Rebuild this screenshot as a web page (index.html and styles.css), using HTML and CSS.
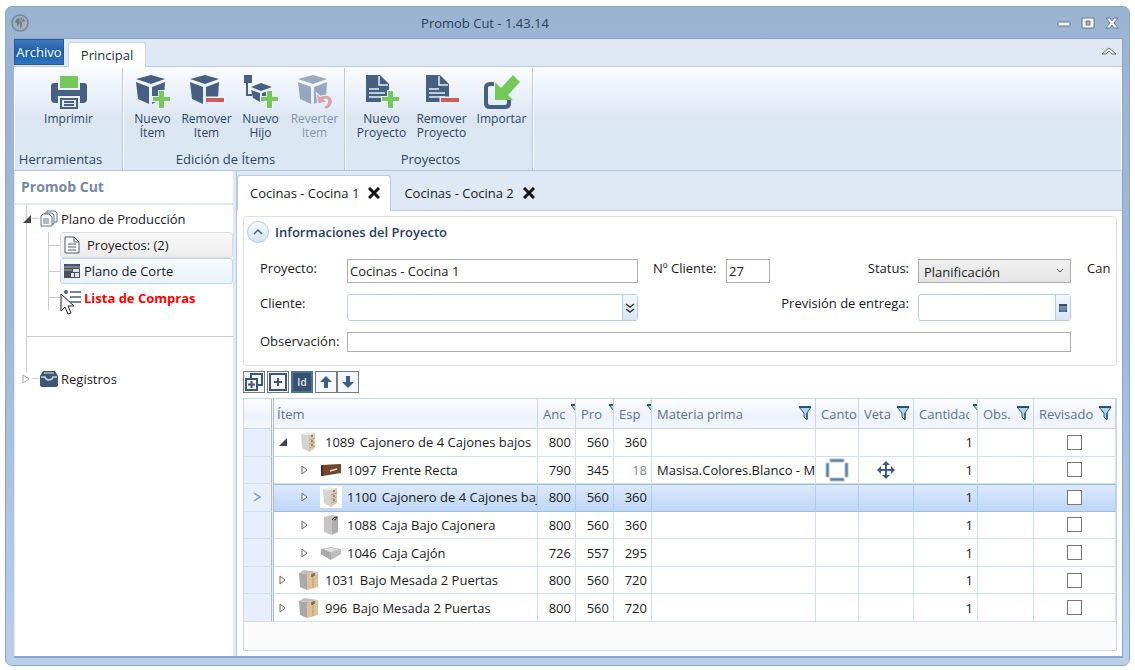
FILE: index.html
```html
<!doctype html>
<html lang="es">
	<head>
		<meta charset="utf-8"/>
		<title>Promob Cut - 1.43.14</title>
		<link rel="stylesheet" href="styles.css">
	</head>
	<body>
		<!-- iconos compartidos -->
		<svg class="defs" width="0" height="0">
			<symbol id="box" viewBox="0 0 36 36">
				<path d="M16 1 30 5 16 10 1 5zM1 8l13 5v17L3 25zM17 13l13-5-1 16-12 6z"/>
			</symbol>
			<symbol id="doc" viewBox="0 0 36 36">
				<path d="M2 1h14l9 9v18H2z"/>
				<path d="M15 2v9h9M5 15h10M5 19h16M5 23h16" fill="none" stroke="#e6eef8" stroke-width="1.5"/>
			</symbol>
			<symbol id="plus" viewBox="0 0 36 36">
				<path d="M24 17h5v6h6v4h-6v7h-5v-7h-6v-4h6z" fill="#76c85a" stroke="#eaf1fa" stroke-width="2" paint-order="stroke"/>
			</symbol>
			<symbol id="minus" viewBox="0 0 36 36">
				<path d="M17 24h18v4H17z" fill="#cd5c5c" stroke="#eaf1fa" stroke-width="3" paint-order="stroke"/>
			</symbol>
			<symbol id="funnel" viewBox="0 0 14 15">
				<path d="M1 1h12L9 7v7l-3-3V7z" fill="#a9d7f3" stroke="#33597f"/>
				<path d="M1 1h12" stroke="#1d3550" stroke-width="1.5"/>
				<path d="M9 7v6" stroke="#1d3550"/>
			</symbol>
			<symbol id="closed" viewBox="0 0 10 10">
				<path d="M2 1l5 4-5 4z" fill="#fff" stroke="#666"/>
			</symbol>
			<symbol id="open" viewBox="0 0 10 10">
				<path d="M9 1v8H1z" fill="#444"/>
			</symbol>
			<symbol id="drawers" viewBox="0 0 22 22">
				<path d="M3 3l8 1v17l-7-4z" fill="#d3d3d5"/>
				<path d="M3 3l7-2 7 1-6 2z" fill="#ececec"/>
				<path d="M11 4l6-2v15l-6 4z" fill="#dccab0"/>
				<path d="M11 9l6-2M11 13l6-2M11 17l6-2" stroke="#b8a48c"/>
				<path d="M13 5h2M13 10h2M13 14h2" stroke="#5d4b3c"/>
			</symbol>
			<symbol id="doors" viewBox="0 0 22 22">
				<path d="M1 4l8 1v16l-7-3z" fill="#aaa9a9"/>
				<path d="M1 4l5-3 14 2-11 2z" fill="#c4bcb2"/>
				<path d="M9 5l11-2v15L9 21z" fill="#dcc09a"/>
				<path d="M15 4v15" stroke="#bc9b70"/>
				<path d="M14 5v3M16 4v3" stroke="#333"/>
			</symbol>
		</svg>

		<div class="window">
			<header class="titlebar">
				<svg class="logo" viewBox="0 0 18 18"><circle cx="9" cy="9" r="8" fill="#9fb0bf" stroke="#708799" stroke-width="1.5"/><path d="M4 8c1-4 5-5 8-4l2 3-3 1v4l-2 3V9l-3 4V9z" fill="#6e7c87"/><path d="M9 3v5M12 4l-2 4" stroke="#9fb0bf"/></svg>
				<h1>Promob Cut - 1.43.14</h1>
				<div class="winbtns">
					<button type="button" aria-label="Minimizar"><svg viewBox="0 0 14 12"><path d="M1 5h12v4H1z" fill="#fff" stroke="#65788f"/></svg></button>
					<button type="button" aria-label="Maximizar"><svg viewBox="0 0 14 12"><path d="M1 1h12v10H1zM5 4v4h4V4z" fill="#fff" fill-rule="evenodd" stroke="#65788f"/></svg></button>
					<button type="button" aria-label="Cerrar"><svg viewBox="0 0 14 12"><path d="M1 1h4l2 3 2-3h4L9 6l4 5H9L7 8l-2 3H1l4-5z" fill="#fff" stroke="#65788f"/></svg></button>
				</div>
			</header>

			<div class="client">
				<!-- pestañas de la cinta -->
				<nav class="ribbon-tabs">
					<button type="button" class="file">Archivo</button>
					<button type="button" class="current">Principal</button>
					<button type="button" class="collapse" aria-label="Contraer"><svg viewBox="0 0 16 10"><path d="M1 8l7-6 7 6h-4L8 5 5 8z" fill="#fff" stroke="#666"/></svg></button>
				</nav>

				<div class="ribbon">
					<section class="group tools">
						<div class="items">
							<button type="button"><svg viewBox="0 0 36 36"><path d="M3 9h4v7h22V9h4q3 0 3 3v13q0 4-4 4h-3v-7H7v7H4q-4 0-4-4V12q0-3 3-3z"/><path d="M9 2h18v12H9z" fill="#76c85a"/><path d="M10 25h16v9H10zM13 28h10M13 31h10" fill="none" stroke="#465f82" stroke-width="2"/></svg>Imprimir</button>
						</div>
						<h2>Herramientas</h2>
					</section>
					<section class="group edit">
						<div class="items">
							<button type="button"><svg viewBox="0 0 36 36"><use href="#box"/><use href="#plus"/></svg>Nuevo<br>Ítem</button>
							<button type="button"><svg viewBox="0 0 36 36"><use href="#box"/><use href="#minus"/></svg>Remover<br>Item</button>
							<button type="button"><svg viewBox="0 0 36 36"><path d="M1 1h8v8H1zM18 9l11 4-11 4-10-4zM8 16l9 3v9l-7-4zM19 19l10-3v7l-10 5z"/><path d="M4 9v12h5" fill="none" stroke="#465f82" stroke-width="2"/><use href="#plus"/></svg>Nuevo<br>Hijo</button>
							<button type="button" disabled><svg viewBox="0 0 36 36"><use href="#box"/><path d="M20 20l1 9 8-1-3-3q6-2 5 3 0 3-4 5l2 2q6-3 6-8-2-8-12-4z" fill="#cd5c5c" stroke="#eaf1fa" paint-order="stroke" stroke-width="2"/></svg>Reverter<br>Item</button>
						</div>
						<h2>Edición de Ítems</h2>
					</section>
					<section class="group projects">
						<div class="items">
							<button type="button"><svg viewBox="0 0 36 36"><use href="#doc"/><use href="#plus"/></svg>Nuevo<br>Proyecto</button>
							<button type="button"><svg viewBox="0 0 36 36"><use href="#doc"/><use href="#minus"/></svg>Remover<br>Proyecto</button>
							<button type="button"><svg viewBox="0 0 36 36"><path d="M10 10H6q-4 0-4 4v15q0 4 4 4h15q4 0 4-4v-3" fill="none" stroke="#465f82" stroke-width="4"/><path d="M11 8v18h18l-5-5L36 8l-7-7-12 13z" fill="#76c85a"/></svg>Importar</button>
						</div>
						<h2>Proyectos</h2>
					</section>
				</div>

				<div class="workspace">
					<!-- árbol de navegación -->
					<aside class="sidebar">
						<h2>Promob Cut</h2>
						<ul class="tree">
							<li>
								<div class="node">
									<svg class="arrow" viewBox="0 0 10 10"><use href="#open"/></svg><span class="dash"></span>
									<svg class="ico" viewBox="0 0 18 18"><g fill="#fff" stroke="#5d7592"><path d="M7 1h8l2 2v9H7z"/><path d="M5 3h7l2 2v9H5z"/><path d="M3 4h6l3 3v9H1V6z"/></g><path d="M3 9h6M3 11h6M3 13h6" stroke="#5d7592"/></svg>
									<a href="#">Plano de Producción</a>
								</div>
								<ul>
									<li><span class="dash"></span><a href="#" class="leaf grey"><svg class="ico" viewBox="0 0 18 18"><path d="M2 1h9l5 5v11H2z" fill="#fff" stroke="#465f82"/><path d="M11 1v5h5M5 8h8M5 11h8M5 14h8" fill="none" stroke="#465f82"/></svg>Proyectos: (2)</a></li>
									<li><span class="dash"></span><a href="#" class="leaf blue"><svg class="ico" viewBox="0 0 18 18"><path d="M1 2h16v14H1z" fill="#4a4f58"/><path d="M1 5h16M1 8h8" stroke="#aab5c3"/><path d="M3 3h12" stroke="#465f82"/><path d="M10 7h6v3h-6zM8 11h3v4H8zM12 11h4v4h-4z" fill="#dfe5ec"/></svg>Plano de Corte</a></li>
									<li><span class="dash"></span><a href="#" class="leaf red"><svg class="ico" viewBox="0 0 18 18"><circle cx="3" cy="3" r="2" fill="#465f82"/><path d="M7 3h11M7 8h11M7 13h11" stroke="#465f82" stroke-width="1.5"/></svg>Lista de Compras</a></li>
								</ul>
							</li>
							<li class="rule"></li>
							<li>
								<div class="node">
									<svg class="arrow" viewBox="0 0 10 10"><path d="M1 1l6 4-6 4z" fill="#fff" stroke="#aaa"/></svg><span class="dash"></span>
									<svg class="ico" viewBox="0 0 18 18"><path d="M3 1h12l3 5v9q0 2-2 2H2q-2 0-2-2V6z" fill="#3f5676"/><path d="M1 7h4q1 3 4 3t4-3h4" fill="none" stroke="#c9d5e4" stroke-width="1.5"/><path d="M4 3h10" stroke="#dde5ef"/></svg>
									<a href="#">Registros</a>
								</div>
							</li>
						</ul>
						<svg class="cursor" viewBox="0 0 15 22"><path d="M1 1v17l4-4 3 7 3-1-3-7h6z" fill="#fff" stroke="#222"/></svg>
					</aside>

					<main class="main">
						<div class="doc-tabs">
							<div class="tab active">Cocinas - Cocina 1<button type="button" aria-label="Cerrar"><svg viewBox="0 0 12 12"><path d="M1 1l10 10M11 1L1 11" stroke="#111" stroke-width="3"/></svg></button></div>
							<div class="tab">Cocinas - Cocina 2<button type="button" aria-label="Cerrar"><svg viewBox="0 0 12 12"><path d="M1 1l10 10M11 1L1 11" stroke="#111" stroke-width="3"/></svg></button></div>
						</div>

						<div class="page">
							<section class="info">
								<div class="info-head">
									<button type="button" aria-label="Contraer"><svg viewBox="0 0 10 6"><path d="M1 5l4-4 4 4" fill="none" stroke="#4a6080" stroke-width="1.5"/></svg></button>
									<h2>Informaciones del Proyecto</h2>
								</div>
								<form class="fields">
									<label for="proyecto">Proyecto:</label>
									<input id="proyecto" type="text" value="Cocinas - Cocina 1">
									<div class="mid">
										<label for="ncliente" class="short">Nº Cliente:</label>
										<input id="ncliente" type="text" value="27">
										<label for="status" class="right">Status:</label>
									</div>
									<select id="status"><option>Planificación</option></select>
									<span class="more">Can</span>

									<label for="cliente">Cliente:</label>
									<div class="combo">
										<input id="cliente" type="text">
										<button type="button" aria-label="Buscar cliente"><svg viewBox="0 0 10 12"><path d="M1 2l4 3 4-3M1 7l4 3 4-3" fill="none" stroke="#333" stroke-width="1.5"/></svg></button>
									</div>
									<div class="mid"><label for="entrega" class="right">Previsión de entrega:</label></div>
									<div class="combo date">
										<input id="entrega" type="text">
										<button type="button" aria-label="Calendario"><svg viewBox="0 0 10 12"><path d="M1 2h8v8H1z" fill="#34507a"/><path d="M1 5h8M1 7h8M3 4v6M5 4v6M7 4v6" stroke="#b9c8de" stroke-width=".6"/></svg></button>
									</div>
									<span></span>

									<label for="obs">Observación:</label>
									<input id="obs" class="wide" type="text">
								</form>
							</section>

							<div class="toolbar">
								<button type="button" aria-label="Expandir todo"><svg viewBox="0 0 18 18"><path d="M6 5V1h11v11h-4" fill="none" stroke="#3f5676" stroke-width="2"/><path d="M1 6h11v11H1zM6.500 8v7M3 11.500h7" fill="none" stroke="#3f5676" stroke-width="2"/></svg></button>
								<button type="button" aria-label="Expandir"><svg viewBox="0 0 18 18"><path d="M1 1h16v16H1zM9 5v8M5 9h8" fill="none" stroke="#3f5676" stroke-width="2"/></svg></button>
								<button type="button" class="on">Id</button>
								<div class="pair">
									<button type="button" aria-label="Subir"><svg viewBox="0 0 18 18"><path d="M9 3l6 6h-4v6H7V9H3z" fill="#3d5c8c"/></svg></button>
									<button type="button" aria-label="Bajar"><svg viewBox="0 0 18 18"><path d="M9 15l6-6h-4V3H7v6H3z" fill="#3d5c8c"/></svg></button>
								</div>
							</div>

							<!-- lista de ítems -->
							<div class="grid">
								<table>
									<colgroup>
										<col class="c-mark"><col class="c-item"><col class="c-num"><col class="c-num"><col class="c-num"><col><col class="c-canto"><col class="c-veta"><col class="c-cant"><col class="c-obs"><col class="c-rev">
									</colgroup>
									<thead>
										<tr>
											<th></th>
											<th class="item">Ítem</th>
											<th><div class="th"><span>Anc</span><svg class="cut" viewBox="0 0 5 15"><use href="#funnel" width="14" height="15"/></svg></div></th>
											<th><div class="th"><span>Pro</span><svg class="cut" viewBox="0 0 5 15"><use href="#funnel" width="14" height="15"/></svg></div></th>
											<th><div class="th"><span>Esp</span><svg class="cut" viewBox="0 0 5 15"><use href="#funnel" width="14" height="15"/></svg></div></th>
											<th><div class="th"><span>Materia prima</span><svg viewBox="0 0 14 15"><use href="#funnel"/></svg></div></th>
											<th><div class="th"><span>Canto</span></div></th>
											<th><div class="th"><span>Veta</span><svg viewBox="0 0 14 15"><use href="#funnel"/></svg></div></th>
											<th><div class="th"><span>Cantidad</span><svg class="cut" viewBox="0 0 5 15"><use href="#funnel" width="14" height="15"/></svg></div></th>
											<th><div class="th"><span>Obs.</span><svg viewBox="0 0 14 15"><use href="#funnel"/></svg></div></th>
											<th><div class="th"><span>Revisado</span><svg viewBox="0 0 14 15"><use href="#funnel"/></svg></div></th>
										</tr>
									</thead>
									<tbody>
										<tr>
											<td></td>
											<td class="item"><div class="cell"><svg class="arrow" viewBox="0 0 10 10"><use href="#open"/></svg><svg class="thumb" viewBox="0 0 22 22"><use href="#drawers"/></svg><span>1089</span><span>Cajonero de 4 Cajones bajos</span></div></td>
											<td class="num">800</td><td class="num">560</td><td class="num">360</td><td></td><td></td><td></td><td class="num">1</td><td></td>
											<td class="check"><input type="checkbox" aria-label="Revisado 1089"></td>
										</tr>
										<tr>
											<td></td>
											<td class="item"><div class="cell sub"><svg class="arrow" viewBox="0 0 10 10"><use href="#closed"/></svg><svg class="thumb" viewBox="0 0 22 22"><path d="M1 6l20-1v9L3 17H1z" fill="#74462d"/><path d="M1 6l2 1v10l-2-1z" fill="#4c2c1c"/><path d="M10 12l7-2" stroke="#e8ddd6" stroke-width="1.500"/></svg><span>1097</span><span>Frente Recta</span></div></td>
											<td class="num">790</td><td class="num">345</td><td class="num dim">18</td><td class="mat">Masisa.Colores.Blanco - MDF</td>
											<td class="pic"><svg viewBox="0 0 24 24"><path d="M1 5h3v14H1zM20 5h3v14h-3zM5 1h14v3H5zM5 20h14v3H5z" fill="#4a84b5" stroke="#b9bdc2"/></svg></td>
											<td class="pic"><svg class="move" viewBox="0 0 18 18"><path d="M9 0l4 4h-3v4h4V5l4 4-4 4v-3h-4v4h3l-4 4-4-4h3v-4H4v3L0 9l4-4v3h4V4H5z" fill="#3d5c8c"/></svg></td>
											<td class="num">1</td><td></td>
											<td class="check"><input type="checkbox" aria-label="Revisado 1097"></td>
										</tr>
										<tr class="selected">
											<td class="pic"><svg class="mark" viewBox="0 0 10 10"><path d="M1 1l6 4-6 4" fill="none" stroke="#7f9cc8" stroke-width="1.500"/></svg></td>
											<td class="item"><div class="cell sub"><svg class="arrow" viewBox="0 0 10 10"><use href="#closed"/></svg><svg class="thumb" viewBox="0 0 22 22"><use href="#drawers"/></svg><span>1100</span><span>Cajonero de 4 Cajones bajos</span></div></td>
											<td class="num">800</td><td class="num">560</td><td class="num">360</td><td></td><td></td><td></td><td class="num">1</td><td></td>
											<td class="check"><input type="checkbox" aria-label="Revisado 1100"></td>
										</tr>
										<tr>
											<td></td>
											<td class="item"><div class="cell sub"><svg class="arrow" viewBox="0 0 10 10"><use href="#closed"/></svg><svg class="thumb" viewBox="0 0 22 22"><path d="M4 3l8-2 6 1-6 2v17l-8-3z" fill="#c5c5c5"/><path d="M12 4l6-2v16l-6 3z" fill="#adadad"/><path d="M12 6q2-4 5-3-1 3-3 3" fill="none" stroke="#333"/></svg><span>1088</span><span>Caja Bajo Cajonera</span></div></td>
											<td class="num">800</td><td class="num">560</td><td class="num">360</td><td></td><td></td><td></td><td class="num">1</td><td></td>
											<td class="check"><input type="checkbox" aria-label="Revisado 1088"></td>
										</tr>
										<tr>
											<td></td>
											<td class="item"><div class="cell sub"><svg class="arrow" viewBox="0 0 10 10"><use href="#closed"/></svg><svg class="thumb" viewBox="0 0 22 22"><path d="M1 7l10-2 10 2v5l-10 6-10-6z" fill="#bdbdbd"/><path d="M1 7l10 4v7L1 12z" fill="#a9a9a9"/><path d="M3 7l8-1 8 1-8 3z" fill="#dedede"/></svg><span>1046</span><span>Caja Cajón</span></div></td>
											<td class="num">726</td><td class="num">557</td><td class="num">295</td><td></td><td></td><td></td><td class="num">1</td><td></td>
											<td class="check"><input type="checkbox" aria-label="Revisado 1046"></td>
										</tr>
										<tr>
											<td></td>
											<td class="item"><div class="cell"><svg class="arrow" viewBox="0 0 10 10"><use href="#closed"/></svg><svg class="thumb" viewBox="0 0 22 22"><use href="#doors"/></svg><span>1031</span><span>Bajo Mesada 2 Puertas</span></div></td>
											<td class="num">800</td><td class="num">560</td><td class="num">720</td><td></td><td></td><td></td><td class="num">1</td><td></td>
											<td class="check"><input type="checkbox" aria-label="Revisado 1031"></td>
										</tr>
										<tr>
											<td></td>
											<td class="item"><div class="cell"><svg class="arrow" viewBox="0 0 10 10"><use href="#closed"/></svg><svg class="thumb" viewBox="0 0 22 22"><use href="#doors"/></svg><span>996</span><span>Bajo Mesada 2 Puertas</span></div></td>
											<td class="num">800</td><td class="num">560</td><td class="num">720</td><td></td><td></td><td></td><td class="num">1</td><td></td>
											<td class="check"><input type="checkbox" aria-label="Revisado 996"></td>
										</tr>
									</tbody>
								</table>
							</div>
						</div>
					</main>
				</div>
			</div>
		</div>
	</body>
</html>
```
FILE: styles.css
```css
*{box-sizing:border-box;}
body{margin:6px 5px 4px;background:#fff;font:13px/18px "Open Sans","Noto Sans",sans-serif;color:#1a1a1a;}
h1,h2,ul,form{margin:0;padding:0;font-size:13px;font-weight:normal;}
ul{list-style:none;}
a{color:inherit;text-decoration:none;}
button{margin:0;padding:0;border:0;background:none;font:inherit;color:inherit;}
input,select{margin:0;font:inherit;color:#222;min-width:0;border-radius:0;}
svg{display:block;flex:none;}
.defs{position:absolute;}

/* ventana */
.window{display:flex;flex-direction:column;min-height:calc(100vh - 10px);padding:0 6px 7px 8px;border:1px solid #8ba5c4;border-radius:7px;background:linear-gradient(#9ab4d1,#a0bad8 50%,#b9cfea);}
.titlebar{display:flex;align-items:center;height:31px;color:#2b3f58;}
.titlebar h1{flex:1;padding-right:116px;text-align:center;}
.logo{width:18px;height:18px;margin-left:-3px;}
.winbtns{display:flex;gap:10px;margin-right:4px;}
.winbtns svg{width:14px;height:12px;}
.client{flex:1;display:flex;flex-direction:column;border:1px solid #8ba5c4;border-width:1px 1px 2px 0;background:#dfe8f5;}

/* cinta */
.ribbon-tabs{display:flex;align-items:flex-end;height:28px;border-bottom:1px solid #b9cce4;}
.file{width:50px;height:26px;margin-bottom:1px;background:linear-gradient(#4079be,#1f5ea6 50%,#2b76bd);border:1px solid #2a569c;color:#fff;}
.current{width:78px;height:25px;margin:0 0 -1px 4px;border:1px solid #c5d5e8;border-bottom:0;border-radius:3px 3px 0 0;background:#fff;color:#1e2f45;}
.collapse{margin:0 5px 10px auto;}
.collapse svg{width:16px;height:10px;}
.ribbon{display:flex;height:104px;border:1px solid #fff;border-bottom:1px solid #b3c5df;background:linear-gradient(#f9fbfe,#e8eff9 30%,#dce6f3 50%,#dce8f5);color:#2c4566;}
.group{display:flex;flex-direction:column;justify-content:space-between;border-right:1px solid #b9cbe2;box-shadow:1px 0 #fff;}
.group h2{text-align:center;padding:0 16px 2px 0;}
.items{display:flex;justify-content:center;align-items:flex-start;padding-top:6px;}
.items button{display:block;width:54px;line-height:14px;font-size:12px;}
.items svg{width:36px;height:36px;margin:0 auto 2px;fill:#465f82;}
.items button:disabled{opacity:.5;}
.tools{width:108px;}
.edit{width:222px;}
.projects{width:188px;}
.projects .items{padding-left:6px;}
.projects .items button{width:60px;}

/* panel lateral */
.workspace{flex:1;display:flex;}
.sidebar{position:relative;width:218px;background:#fff;margin-left:1px;}
.sidebar h2{height:34px;padding:7px 6px;border-bottom:2px solid #dce7f5;font-size:14px;font-weight:bold;color:#7689a0;}
.tree{background:linear-gradient(#ccc,#ccc) 11px 0/1px 167px no-repeat;}
.node{display:flex;align-items:center;height:27px;padding-left:7px;}
.arrow{width:10px;height:10px;}
.dash{width:7px;height:1px;background:#ccc;}
.ico{width:18px;height:18px;}
.node .ico{margin:0 3px 0 1px;}
.tree ul{margin-left:33px;padding-bottom:25px;background:linear-gradient(#ccc,#ccc) 0 0/1px 78px no-repeat;}
.tree ul li{display:flex;align-items:center;}
.tree ul .dash{width:12px;}
.leaf{flex:1;display:flex;align-items:center;gap:3px;height:27px;padding-left:2px;border:1px solid transparent;border-radius:3px;}
.grey{height:26px;gap:6px;border-color:#dcdcdc;background:linear-gradient(#f8f8f8,#ececec);}
.blue{height:26px;border-color:#b8d6fb;background:linear-gradient(#f8fbff,#eaf2fd);}
.red{color:#f00;font-weight:bold;}
.rule{height:29px;margin-left:11px;border-top:1px solid #ccc;}
.cursor{position:absolute;left:45px;top:122px;width:15px;height:22px;}

/* documentos */
.main{flex:1;display:flex;flex-direction:column;min-width:0;margin-left:3px;padding-top:4px;border-left:1px solid #b3c8e0;}
.doc-tabs{display:flex;height:36px;border-bottom:1px solid #b9cce4;}
.tab{display:flex;align-items:center;gap:9px;height:36px;padding:0 10px 0 12px;border:1px solid transparent;}
.tab.active{background:#fff;border-color:#b9cce4;border-bottom-color:#fff;border-radius:3px 3px 0 0;}
.tab svg{width:12px;height:12px;}
.page{flex:1;display:flex;flex-direction:column;gap:5px;padding:5px 5px 5px 6px;background:#fff;}
.info{border:1px solid #dfdfdf;border-radius:4px;padding:4px 7px 13px 3px;}
.info-head{display:flex;align-items:center;gap:6px;height:38px;padding-bottom:16px;}
.info-head button{display:flex;align-items:center;justify-content:center;width:22px;height:22px;border:1px solid #b9cce4;border-radius:50%;background:linear-gradient(#f6faff,#d5e3f5);}
.info-head svg{width:10px;height:6px;}
.info-head h2{font-weight:600;color:#1f3c66;}

.fields{display:grid;grid-template-columns:87px minmax(0,1fr) 280px 153px 38px;grid-template-rows:24px 27px 20px;row-gap:11px;padding-left:13px;}
.fields label,.more{line-height:18px;white-space:nowrap;}
.fields input{width:100%;height:100%;padding:0 2px;border:1px solid #aaacb2;background:#fff;}
.mid{display:flex;padding:0 9px 0 15px;}
.mid .short{flex:0 0 73px;}
.fields .mid input{width:44px;}
.mid .right{flex:1;text-align:right;}
.fields select{appearance:none;padding:2px 5px 0;border:1px solid #acacac;background:url("data:image/svg+xml,%3Csvg xmlns='http://www.w3.org/2000/svg' viewBox='0 0 8 6'%3E%3Cpath d='M1 1l3 3 3-3' fill='none' stroke='%23555'/%3E%3C/svg%3E") right 6px center/8px 6px no-repeat,linear-gradient(#f0f0f0,#e4e4e4);}
.more{padding-left:16px;}
.combo{display:flex;border:1px solid #b5cbe6;border-radius:3px;}
.fields .combo input{flex:1;border:0;border-radius:3px;}
.combo button{display:flex;align-items:center;justify-content:center;width:15px;border-left:1px solid #b5cbe6;background:linear-gradient(#f3f8fe,#d8e5f5);}
.combo svg{width:10px;height:12px;}
.fields .wide{grid-column:2/5;}

.toolbar{display:flex;gap:2px;}
.toolbar button{display:flex;align-items:center;justify-content:center;width:22px;height:22px;border:1px solid #7a7a7a;background:#f4f7fd;}
.toolbar svg{width:18px;height:18px;}
.toolbar .on{background:#3b5170;border:2px solid #3f789e;color:#dbe6f2;font-size:10px;font-weight:600;}
.pair{display:flex;}

/* tabla */
.grid{flex:1;border:1px solid #cbd6e5;background:#fbfbfb;}
table{width:100%;height:223px;table-layout:fixed;border-collapse:separate;border-spacing:0;background:#fff;}
.c-mark{width:30px;}
.c-item{width:264px;}
.c-num{width:38px;}
.c-canto{width:43px;}
.c-veta{width:55px;}
.c-cant{width:64px;}
.c-obs{width:56px;}
.c-rev{width:82px;}
th,td{padding:0;border-right:1px solid #cfe0f5;border-bottom:1px solid #cfe0f5;overflow:hidden;white-space:nowrap;}
th{height:30px;text-align:left;font-weight:normal;color:#5d7390;background:linear-gradient(#fcfdff,#edf2fc 60%,#f4f7fd);border-color:#c9d6ea;}
td{height:27px;}
th.item{padding-left:3px;}
.th{display:flex;align-items:center;gap:3px;padding-left:5px;}
.th span{flex:1;overflow:hidden;min-width:0;}
.th svg{width:14px;height:15px;margin-right:3px;}
.th svg.cut{width:5px;height:15px;margin:0 0 4px;}
td:first-child,th:first-child{border-right:3px double #b4bac4;}
td:first-child{background:#e8effc;}
.cell{display:flex;align-items:center;gap:5px;padding-left:4px;overflow:hidden;}
.cell .arrow{margin-right:5px;}
.cell.sub{padding-left:26px;}
.thumb{width:22px;height:22px;}
.num{text-align:right;padding-right:4px;}
.dim{color:#888;}
.mat{padding-left:5px;}
td.pic svg{width:24px;height:24px;margin:0 auto;}
td.pic svg.move{width:18px;height:18px;}
td.pic svg.mark{width:10px;height:10px;}
.check{text-align:center;}
.check input{appearance:none;display:block;width:15px;height:15px;margin:0 auto;border:1px solid #777;background:#fff;}
.selected td:not(:first-child){background:linear-gradient(#dceafd,#bed6f8);border-right-color:#afcdf0;border-bottom-color:#9dbbe0;box-shadow:inset 0 1px #9dbbe0;}
.selected .thumb{background:#fff;}
```
